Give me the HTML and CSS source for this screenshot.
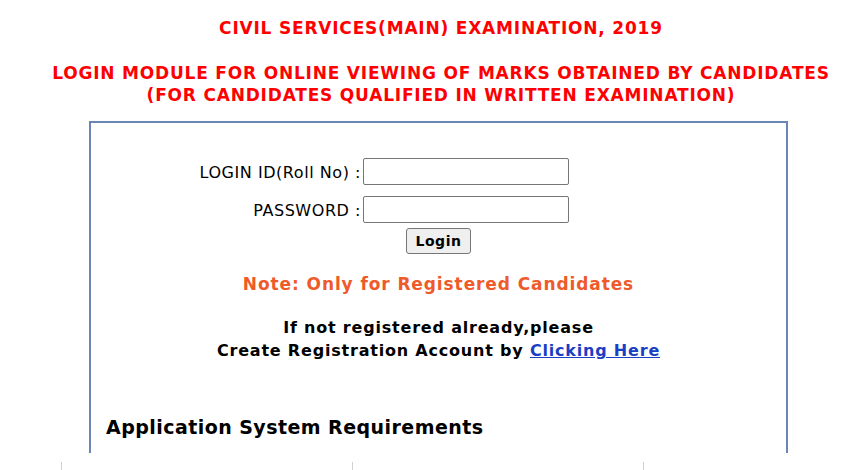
FILE: index.html
```html
<!DOCTYPE html>
<html lang="en">
<head>
    <meta charset="UTF-8">
    <title>Civil Services (Main) Examination, 2019 - Marks</title>
    <link rel="stylesheet" href="styles.css">
</head>
<body>
    <div class="page">
        <div class="header">
            <h1>CIVIL SERVICES(MAIN) EXAMINATION, 2019</h1>
            <h2>LOGIN MODULE FOR ONLINE VIEWING OF MARKS OBTAINED BY CANDIDATES<br>(FOR CANDIDATES QUALIFIED IN WRITTEN EXAMINATION)</h2>
        </div>

        <div class="login-box">
            <form class="login-form" onsubmit="return false;">
                <div class="form-row">
                    <label for="rollno">LOGIN ID(Roll No) :</label>
                    <input type="text" id="rollno">
                </div>
                <div class="form-row">
                    <label for="password">PASSWORD :</label>
                    <input type="password" id="password">
                </div>
                <div class="form-actions">
                    <button type="submit">Login</button>
                </div>
            </form>

            <p class="note">Note: Only for Registered Candidates</p>

            <p class="register">
                If not registered already,please<br>
                Create Registration Account by <a href="#">Clicking Here</a>
            </p>

            <h3>Application System Requirements</h3>
        </div>

        <table class="req-table">
            <tr>
                <td class="col-wide"></td>
                <td class="col-wide"></td>
                <td></td>
            </tr>
        </table>
    </div>
</body>
</html>
```

FILE: styles.css
```css
* {
    margin: 0;
    padding: 0;
    box-sizing: border-box;
}

body {
    font-family: "DejaVu Sans", Verdana, sans-serif;
    color: #000;
    background: #fff;
    overflow: hidden;
}

.page {
    width: 100%;
}

.header {
    text-align: center;
    color: #f00;
    font-weight: bold;
    padding: 17px 0 0 15px;
    letter-spacing: 0.8px;
}

.header h1 {
    font-size: 17px;
    line-height: 22px;
}

.header h2 {
    font-size: 17px;
    line-height: 22px;
    margin-top: 23px;
}

.login-box {
    width: 699px;
    height: 332px;
    margin: 15px 0 0 89px;
    border: 2px solid #6a86b4;
    border-bottom: none;
    text-align: center;
}

.login-form {
    padding-top: 35px;
}

.form-row {
    display: flex;
    align-items: center;
    margin-bottom: 11px;
}

.form-row label {
    width: 272px;
    text-align: right;
    font-size: 16px;
    letter-spacing: 0.55px;
    padding: 2px 2px 0 0;
}

.form-row input {
    width: 206px;
    height: 27px;
    border: 1px solid #767676;
    border-radius: 2px;
    font-size: 14px;
    padding: 0 3px;
}

.form-actions {
    margin-top: -6px;
}

.form-actions button {
    width: 65px;
    height: 26px;
    font-family: "DejaVu Sans", Verdana, sans-serif;
    font-weight: bold;
    font-size: 14px;
    letter-spacing: 0.5px;
    background: #efefef;
    border: 1px solid #767676;
    border-radius: 3px;
}

.note {
    color: #ef5a2b;
    font-weight: bold;
    font-size: 17px;
    letter-spacing: 0.9px;
    margin-top: 20px;
}

.register {
    font-weight: bold;
    font-size: 16px;
    line-height: 23px;
    letter-spacing: 0.8px;
    margin-top: 22px;
}

.register a {
    color: #1a3fc4;
}

.login-box h3 {
    text-align: left;
    font-size: 19px;
    letter-spacing: 0.45px;
    padding-left: 15px;
    margin-top: 54px;
}

.req-table {
    width: 806px;
    table-layout: fixed;
    border-collapse: collapse;
    margin: 9px 0 0 61px;
}

.req-table td {
    height: 30px;
    border-left: 1px solid #d0d0d0;
}

.req-table .col-wide {
    width: 291px;
}
```
